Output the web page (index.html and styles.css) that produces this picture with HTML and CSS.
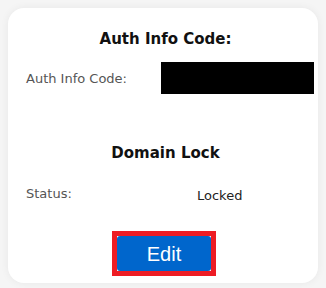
FILE: index.html
```html
<!DOCTYPE html>
<html>
<head>
<meta charset="utf-8">
<link rel="stylesheet" href="styles.css">
</head>
<body>
<div class="card">
  <h2 class="title">Auth Info Code:</h2>
  <div class="row auth-row">
    <span class="label">Auth Info Code:</span>
    <span class="code-mask"></span>
  </div>
  <h2 class="title lock-title">Domain Lock</h2>
  <div class="row status-row">
    <span class="label">Status:</span>
    <span class="value">Locked</span>
  </div>
  <div class="actions">
    <span class="focus-ring"><button class="btn">Edit</button></span>
  </div>
</div>
</body>
</html>
```
FILE: styles.css
```css
html, body {
  margin: 0;
  padding: 0;
}
body {
  background: #f5f5f5;
  padding: 8px;
  font-family: "DejaVu Sans", Verdana, sans-serif;
}
.card {
  background: #fff;
  border-radius: 16px;
  box-shadow: 0 0 8px rgba(0, 0, 0, 0.06);
  height: 275px;
  box-sizing: border-box;
  padding: 22px 4px 0 18px;
}
.title {
  margin: 0;
  font-size: 15px;
  line-height: 18px;
  font-weight: bold;
  color: #111;
  text-align: center;
  padding-right: 9px;
}
.row {
  display: grid;
  align-items: center;
}
.auth-row {
  grid-template-columns: 135px 153px;
  margin-top: 14px;
}
.label {
  font-size: 13px;
  line-height: 15px;
  color: #555;
}
.code-mask {
  display: block;
  height: 32px;
  background: #000;
}
.lock-title {
  margin-top: 50px;
}
.status-row {
  grid-template-columns: 171px 1fr;
  align-items: start;
  margin-top: 24px;
}
.value {
  font-size: 13px;
  line-height: 15px;
  color: #222;
  padding-top: 2px;
}
.actions {
  display: flex;
  justify-content: center;
  margin-top: 28px;
  padding-right: 12px;
}
.focus-ring {
  display: block;
  border: 5px solid #ed1c24;
  background: #fff;
  line-height: 0;
}
.btn {
  display: block;
  width: 94px;
  height: 35px;
  margin: 0;
  padding: 0;
  border: none;
  border-radius: 3px;
  background: #0066cc;
  color: #fff;
  font-family: "Liberation Sans", Arial, sans-serif;
  font-size: 20px;
  line-height: 36px;
}
```
